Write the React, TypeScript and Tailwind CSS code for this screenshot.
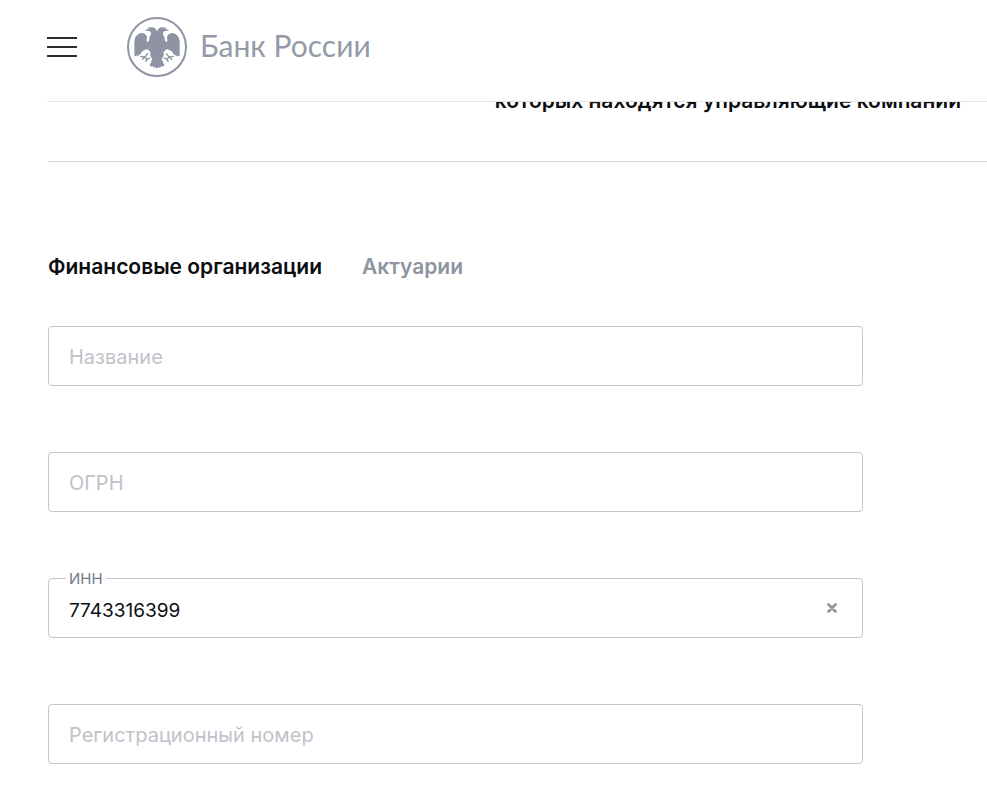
import { useId, useState } from 'react'

function Eagle() {
  return (
    <svg viewBox="0 0 180 180" className="size-15 shrink-0 text-[#8e94a3]" aria-hidden="true">
      <circle cx="90" cy="90" r="87" fill="none" stroke="currentColor" strokeWidth="6" />
      <g id="eagle-half">
        <path
          fill="currentColor"
          d="M90 44 C88 36 83 31 75 31 C70 30 65 32 60 32 L68 36 C62 36 56 37 54 42 C60 40 66 41 70 44 C73 48 73 53 69 57 C66 61 68 68 65 73 C62 77 59 75 59 70 C59 64 62 60 57 54 C53 48 43 46 36 50 C26 55 22 65 22 76 L22 116 C24 119 28 118 29 113 C30 120 34 119 36 112 C39 115 42 112 43 106 L49 101 L60 96 L70 104 L70 116 L76 126 L68 145 C70 149 74 150 77 147 C79 152 84 153 86 150 C87 153 88 154 90 154 Z"
        />
        {/* leg and talons */}
        <path
          fill="none"
          stroke="currentColor"
          strokeWidth="4"
          strokeLinecap="round"
          strokeLinejoin="round"
          d="M41 118 L54 120 L62 110 M54 120 L46 127 M54 120 L60 127 L68 123 M60 127 L57 133"
        />
      </g>
      <use href="#eagle-half" transform="translate(180 0) scale(-1 1)" />
    </svg>
  )
}

function Header() {
  return (
    <header className="fixed inset-x-0 top-0 z-10 bg-white pl-[47px]">
      <div className="flex h-[102px] items-center gap-[50px] border-b border-[#e3e5e6] pb-2">
        <button type="button" aria-label="Меню" className="flex w-[30px] flex-col gap-[7px]">
          <span className="h-[2px] bg-[#2b2d33]" />
          <span className="h-[2px] bg-[#2b2d33]" />
          <span className="h-[2px] bg-[#2b2d33]" />
        </button>
        <a href="#" className="flex items-center gap-[13px]">
          <Eagle />
          <span className="pb-1 font-['Lato','Open_Sans',sans-serif] text-[30px] leading-8 text-[#959aa8]">
            Банк России
          </span>
        </a>
      </div>
    </header>
  )
}

type FieldProps = {
  label: string
  initial?: string
}

function Field({ label, initial = '' }: FieldProps) {
  const id = useId()
  const [value, setValue] = useState(initial)

  return (
    <div className="relative">
      <input
        id={id}
        type="text"
        value={value}
        onChange={e => setValue(e.target.value)}
        className="block h-15 w-full rounded-[4px] border border-[#c4c6ca] bg-white pt-1 pr-14 pl-5 text-[19px] text-[#0d0e10] outline-none focus:border-[#8e94a3]"
      />
      {/* the label moves up onto the border once the field is filled */}
      <label
        htmlFor={id}
        className={
          value
            ? 'absolute -top-[7px] left-[18px] bg-white px-[3px] text-[15px] leading-4 text-[#737987]'
            : 'pointer-events-none absolute top-[17px] left-[21px] text-[20px] leading-7 text-[#c0c2ca]'
        }
      >
        {label}
      </label>
      {value && (
        <button
          type="button"
          aria-label="Очистить"
          onClick={() => setValue('')}
          className="absolute top-5 right-[21px] flex size-5 items-center justify-center text-[#8e94a3]"
        >
          <svg viewBox="0 0 10 10" className="size-[10px]" aria-hidden="true">
            <path d="M1.5 1.5 8.5 8.5 M8.5 1.5 1.5 8.5" stroke="currentColor" strokeWidth="2.6" strokeLinecap="round" />
          </svg>
        </button>
      )}
    </div>
  )
}

export default function App() {
  return (
    <div className="min-h-screen bg-white font-['Inter','Noto_Sans',sans-serif] text-[#0d0e10]">
      <Header />
      <main className="pt-[87px] pl-12">
        <div className="flex justify-end border-b border-[#d3d8da] pr-[26px] pb-[46px]">
          <p className="text-[21px] leading-7 font-semibold">которых находятся управляющие компании</p>
        </div>

        <div className="mt-[91px] flex gap-10 text-[21px] leading-7 font-semibold">
          <button type="button">Финансовые организации</button>
          <button type="button" className="text-[#8e94a0]">
            Актуарии
          </button>
        </div>

        <form className="mt-[45px] mr-31 flex flex-col gap-[66px] pb-9">
          <Field label="Название" />
          <Field label="ОГРН" />
          <Field label="ИНН" initial="7743316399" />
          <Field label="Регистрационный номер" />
        </form>
      </main>
    </div>
  )
}
